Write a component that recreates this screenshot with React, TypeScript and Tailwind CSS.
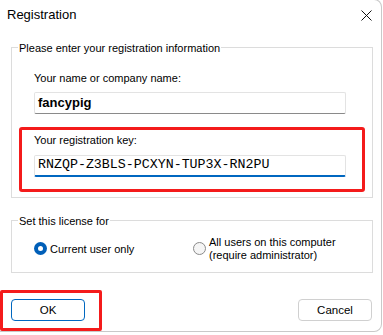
import React from "react";

const ui = { fontFamily: '"Liberation Sans", Arial, sans-serif' };

export default function App() {
  return (
    <div className="w-[383px] h-[335px] bg-white overflow-hidden text-[11px] text-black" style={ui}>
      <div className="w-[382px] h-[333px] border-r border-b border-t border-[#c9c9c9] rounded-tr-[8px] rounded-br-[8px] -mt-[1px] bg-white flex flex-col">
        {/* title bar */}
        <div className="h-[41px] flex items-start justify-between pl-[7px] pr-[9px] pt-[7px]">
          <span className="text-[13px] leading-[16px]">Registration</span>
          <svg width="11" height="11" viewBox="0 0 11 11" className="mt-[3px]">
            <path d="M0.5 0.5 L10.5 10.5 M10.5 0.5 L0.5 10.5" stroke="#111" strokeWidth="1" />
          </svg>
        </div>

        {/* group 1 */}
        <fieldset className="ml-[11px] w-[362px] border border-[#dcdcdc] px-[7px] pb-[5px]">
          <legend className="-ml-[1px] px-[1px] leading-[16px]">Please enter your registration information</legend>
          <div className="px-[15px] pt-[14px]">
            <div className="leading-[16px]">Your name or company name:</div>
            <div className="mt-[6px] w-[312px] h-[22px] border border-[#e3e3e3] border-b-[#8a8a8a] rounded-[2px] flex items-center pl-[3px]">
              <span className="font-bold text-[13px]">fancypig</span>
            </div>
          </div>
          <div className="mt-[13px] w-[346px] border-[3px] border-[#f41b1b] rounded-[3px] pl-[12px] pt-[2px] pb-[12px]">
            <div className="leading-[16px]">Your registration key:</div>
            <div className="mt-[7px] w-[312px] h-[22px] border border-[#e3e3e3] border-b-2 border-b-[#0067c0] rounded-[2px] flex items-center pl-[3px]">
              <span className="text-[13.3px]" style={{ fontFamily: '"Liberation Mono", monospace' }}>RNZQP-Z3BLS-PCXYN-TUP3X-RN2PU</span>
            </div>
          </div>
        </fieldset>

        {/* group 2 */}
        <fieldset className="ml-[11px] mt-[15px] w-[362px] h-[62px] border border-[#dcdcdc]">
          <legend className="ml-[6px] px-[1px] leading-[16px]">Set this license for</legend>
          <div className="flex items-center pl-[22px] pt-[7px]">
            <div className="flex items-center w-[159px]">
              <span className="w-[13px] h-[13px] rounded-full bg-[#005fb8] flex items-center justify-center">
                <span className="w-[5px] h-[5px] rounded-full bg-white" />
              </span>
              <span className="ml-[3px] leading-[16px]">Current user only</span>
            </div>
            <div className="flex items-center">
              <span className="w-[13px] h-[13px] rounded-full border border-[#8a8a8a] bg-[#f5f5f5]" />
              <span className="ml-[3px] leading-[13px]">
                All users on this computer
                <br />
                (require administrator)
              </span>
            </div>
          </div>
        </fieldset>

        {/* buttons */}
        <div className="flex items-start justify-between mt-[17px] pr-[9px]">
          <div className="w-[102px] h-[41px] border-[3px] border-[#f41b1b] rounded-[2px] pl-[8px] pt-[6px]">
            <button className="w-[74px] h-[22px] border border-[#0067c0] rounded-[4px] bg-white leading-[16px] text-[11.5px]">OK</button>
          </div>
          <button className="mt-[9px] w-[74px] h-[22px] border border-[#d0d0d0] rounded-[4px] bg-white leading-[16px] text-[11.5px]">Cancel</button>
        </div>
      </div>
    </div>
  );
}
